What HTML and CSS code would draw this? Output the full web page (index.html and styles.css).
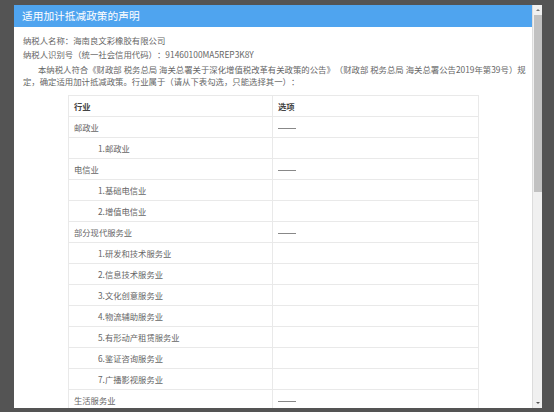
FILE: index.html
```html
<!DOCTYPE html>
<html lang="zh-CN">
<head>
<meta charset="utf-8">
<title>适用加计抵减政策的声明</title>
<link rel="stylesheet" href="styles.css">
</head>
<body>
<div class="dialog">
  <div class="main">
    <div class="title">适用加计抵减政策的声明</div>
    <div class="content">
      <p class="info">纳税人名称：海南良文彩橡胶有限公司</p>
      <p class="info">纳税人识别号（统一社会信用代码）：91460100MA5REP3K8Y</p>
      <p class="para">本纳税人符合《财政部 税务总局 海关总署关于深化增值税改革有关政策的公告》（财政部 税务总局 海关总署公告2019年第39号）规<br>定，确定适用加计抵减政策。行业属于（请从下表勾选，只能选择其一）：</p>
      <table class="tbl">
        <thead>
          <tr><th class="c1">行业</th><th class="c2">选项</th></tr>
        </thead>
        <tbody>
          <tr><td>邮政业</td><td><span class="dash"></span></td></tr>
          <tr><td class="sub">1.邮政业</td><td></td></tr>
          <tr><td>电信业</td><td><span class="dash"></span></td></tr>
          <tr><td class="sub">1.基础电信业</td><td></td></tr>
          <tr><td class="sub">2.增值电信业</td><td></td></tr>
          <tr><td>部分现代服务业</td><td><span class="dash"></span></td></tr>
          <tr><td class="sub">1.研发和技术服务业</td><td></td></tr>
          <tr><td class="sub">2.信息技术服务业</td><td></td></tr>
          <tr><td class="sub">3.文化创意服务业</td><td></td></tr>
          <tr><td class="sub">4.物流辅助服务业</td><td></td></tr>
          <tr><td class="sub">5.有形动产租赁服务业</td><td></td></tr>
          <tr><td class="sub">6.鉴证咨询服务业</td><td></td></tr>
          <tr><td class="sub">7.广播影视服务业</td><td></td></tr>
          <tr><td>生活服务业</td><td><span class="dash"></span></td></tr>
        </tbody>
      </table>
    </div>
  </div>
  <div class="scrollbar">
    <div class="arrow up"></div>
    <div class="thumb"></div>
    <div class="track"></div>
    <div class="arrow down"></div>
  </div>
</div>
</body>
</html>
```
FILE: styles.css
```css
html, body {
  margin: 0;
  padding: 0;
}
body {
  background: #545454;
  width: 554px;
  height: 412px;
  overflow: hidden;
  padding: 5px 12px 4px 14px;
  box-sizing: border-box;
  font-family: "Noto Sans CJK SC", "Noto Sans", sans-serif;
  text-spacing-trim: space-all;
}
.dialog {
  display: flex;
  height: 403px;
  overflow: hidden;
  background: #fff;
}
.main {
  width: 518px;
  overflow: hidden;
}
.title {
  height: 22px;
  line-height: 22px;
  background: #4fa4ef;
  color: #fff;
  font-size: 10.7px;
  padding-left: 8px;
}
.content {
  padding: 6px 3px 0 9px;
  color: #666;
  font-size: 8.4px;
}
.info {
  margin: 0;
  line-height: 14px;
}
.para {
  margin: 3px 0 0 0;
  line-height: 11.5px;
  text-indent: 15px;
}
.tbl {
  margin: 8px 0 0 45px;
  width: 411px;
  border-collapse: collapse;
  table-layout: fixed;
  font-size: 8.3px;
}
.tbl th, .tbl td {
  border: 1px solid #e9e9e9;
  height: 20px;
  padding: 0 0 0 5px;
  text-align: left;
  font-weight: normal;
  color: #666;
  line-height: 20px;
}
.tbl th {
  color: #444;
  font-weight: 600;
}
.tbl th.c1 {
  width: 198px;
}
.tbl td.sub {
  padding-left: 29px;
}
.dash {
  display: inline-block;
  width: 18px;
  height: 1px;
  background: #888;
  vertical-align: middle;
}
.scrollbar {
  width: 10px;
  background: #f0f0f0;
  border-left: 1px solid #dcdcdc;
  box-sizing: border-box;
  display: flex;
  flex-direction: column;
  align-items: center;
}
.arrow {
  height: 10px;
  width: 9px;
  display: flex;
  align-items: center;
  justify-content: center;
}
.arrow.up::before {
  content: "";
  border-left: 2px solid transparent;
  border-right: 2px solid transparent;
  border-bottom: 2px solid #777;
}
.arrow.down::before {
  content: "";
  border-left: 2px solid transparent;
  border-right: 2px solid transparent;
  border-top: 2px solid #555;
}
.thumb {
  width: 8px;
  height: 177px;
  background: #c1c1c1;
}
.track {
  flex: 1;
}
```
